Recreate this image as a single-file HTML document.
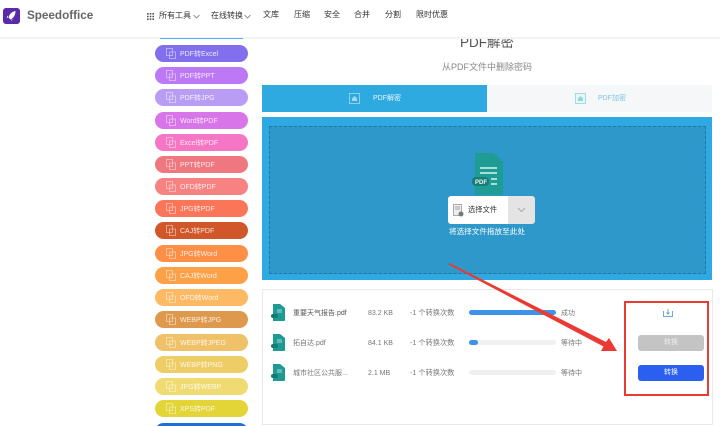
<!DOCTYPE html>
<html lang="zh"><head><meta charset="utf-8">
<style>
html,body{margin:0;padding:0;width:720px;height:426px;overflow:hidden;background:#fff}
#w{position:absolute;left:0;top:0;width:720px;height:426px;overflow:hidden;background:#fff;font-family:"Liberation Sans","Noto Sans CJK SC",sans-serif;color:#333;filter:blur(.3px)}
.a{position:absolute;white-space:nowrap}
.nav{top:9px;font-size:8px;line-height:14px;color:#333}
.pill{position:absolute;left:155px;width:93px;height:17px;border-radius:9px;color:#fff;font-size:7px;line-height:17px;opacity:.95}
.pill span{position:absolute;left:25px;top:1px;opacity:.85}
.pill svg{position:absolute;left:11px;top:3px}
.t{font-size:7px;line-height:12px;color:#777}
.bar{position:absolute;left:469px;width:87px;height:5px;border-radius:3px;background:#f0f0f0}
.bar i{display:block;height:5px;border-radius:3px;background:#3f92ea}
</style></head><body><div id="w">

<div class="a" style="left:0;top:0;width:720px;height:37px;background:#fff;border-bottom:2px solid #f3f3f3"></div>
<svg class="a" style="left:3px;top:8px" width="17" height="16" viewBox="0 0 17 16"><rect width="17" height="16" rx="3" fill="#5b2aa8"/><path d="M12.5 3 C9 3.500 6.500 6 5.500 9.500 L7.500 11.500 C10.500 10 12.500 7 12.500 3Z M5 7.500 L3.500 9.500 L5 9.800Z M8 12 L9.800 11 L8.800 12.800Z" fill="#fff"/></svg>
<div class="a" style="left:27px;top:7px;font-size:11.7px;line-height:18px;font-weight:bold;color:#666">Speedoffice</div>

<svg class="a" style="left:147px;top:13px" width="7" height="7" viewBox="0 0 7 7"><path d="M0 0h1.600v1.600H0zM2.700 0h1.600v1.600H2.700zM5.400 0h1.600v1.600H5.400zM0 2.700h1.600v1.600H0zM2.700 2.700h1.600v1.600H2.700zM5.400 2.700h1.600v1.600H5.400zM0 5.400h1.600v1.600H0zM2.700 5.400h1.600v1.600H2.700zM5.400 5.400h1.600v1.600H5.400z" fill="#555"/></svg>
<div class="a nav" style="left:159px">所有工具</div>
<svg class="a" style="left:193px;top:14px" width="7" height="5" viewBox="0 0 7 5"><path d="M.5 1l3 3 3-3" fill="none" stroke="#777" stroke-width=".8"/></svg>
<div class="a nav" style="left:211px">在线转换</div>
<svg class="a" style="left:244px;top:14px" width="7" height="5" viewBox="0 0 7 5"><path d="M.5 1l3 3 3-3" fill="none" stroke="#777" stroke-width=".8"/></svg>
<div class="a nav" style="left:263px;top:8px">文库</div>
<div class="a nav" style="left:294px;top:8px">压缩</div>
<div class="a nav" style="left:324px;top:8px">安全</div>
<div class="a nav" style="left:354px;top:8px">合并</div>
<div class="a nav" style="left:385px;top:8px">分割</div>
<div class="a nav" style="left:416px;top:8px">限时优惠</div>

<div class="a" style="left:160px;top:38px;width:83px;height:1px;background:#52b0ef"></div>

<div class="pill" style="top:45px;background:#7b68ee"><svg width="10" height="11" viewBox="0 0 10 11"><path d="M.5.500h6v7h-6zM3.500 4h6v6.500h-6z" fill="none" stroke="#fff" stroke-opacity=".55" stroke-width=".8"/></svg><span>PDF转Excel</span></div>
<div class="pill" style="top:67px;background:#b971f5"><svg width="10" height="11" viewBox="0 0 10 11"><path d="M.5.500h6v7h-6zM3.500 4h6v6.500h-6z" fill="none" stroke="#fff" stroke-opacity=".55" stroke-width=".8"/></svg><span>PDF转PPT</span></div>
<div class="pill" style="top:89px;background:#b698f5"><svg width="10" height="11" viewBox="0 0 10 11"><path d="M.5.500h6v7h-6zM3.500 4h6v6.500h-6z" fill="none" stroke="#fff" stroke-opacity=".55" stroke-width=".8"/></svg><span>PDF转JPG</span></div>
<div class="pill" style="top:112px;background:#d56ee8"><svg width="10" height="11" viewBox="0 0 10 11"><path d="M.5.500h6v7h-6zM3.500 4h6v6.500h-6z" fill="none" stroke="#fff" stroke-opacity=".55" stroke-width=".8"/></svg><span>Word转PDF</span></div>
<div class="pill" style="top:134px;background:#f56fc1"><svg width="10" height="11" viewBox="0 0 10 11"><path d="M.5.500h6v7h-6zM3.500 4h6v6.500h-6z" fill="none" stroke="#fff" stroke-opacity=".55" stroke-width=".8"/></svg><span>Excel转PDF</span></div>
<div class="pill" style="top:156px;background:#ef7079"><svg width="10" height="11" viewBox="0 0 10 11"><path d="M.5.500h6v7h-6zM3.500 4h6v6.500h-6z" fill="none" stroke="#fff" stroke-opacity=".55" stroke-width=".8"/></svg><span>PPT转PDF</span></div>
<div class="pill" style="top:178px;background:#f77c7c"><svg width="10" height="11" viewBox="0 0 10 11"><path d="M.5.500h6v7h-6zM3.500 4h6v6.500h-6z" fill="none" stroke="#fff" stroke-opacity=".55" stroke-width=".8"/></svg><span>OFD转PDF</span></div>
<div class="pill" style="top:200px;background:#fb6f50"><svg width="10" height="11" viewBox="0 0 10 11"><path d="M.5.500h6v7h-6zM3.500 4h6v6.500h-6z" fill="none" stroke="#fff" stroke-opacity=".55" stroke-width=".8"/></svg><span>JPG转PDF</span></div>
<div class="pill" style="top:222px;background:#cf4f1f"><svg width="10" height="11" viewBox="0 0 10 11"><path d="M.5.500h6v7h-6zM3.500 4h6v6.500h-6z" fill="none" stroke="#fff" stroke-opacity=".55" stroke-width=".8"/></svg><span>CAJ转PDF</span></div>
<div class="pill" style="top:245px;background:#fd8a3e"><svg width="10" height="11" viewBox="0 0 10 11"><path d="M.5.500h6v7h-6zM3.500 4h6v6.500h-6z" fill="none" stroke="#fff" stroke-opacity=".55" stroke-width=".8"/></svg><span>JPG转Word</span></div>
<div class="pill" style="top:267px;background:#fd9d40"><svg width="10" height="11" viewBox="0 0 10 11"><path d="M.5.500h6v7h-6zM3.500 4h6v6.500h-6z" fill="none" stroke="#fff" stroke-opacity=".55" stroke-width=".8"/></svg><span>CAJ转Word</span></div>
<div class="pill" style="top:289px;background:#feb65c"><svg width="10" height="11" viewBox="0 0 10 11"><path d="M.5.500h6v7h-6zM3.500 4h6v6.500h-6z" fill="none" stroke="#fff" stroke-opacity=".55" stroke-width=".8"/></svg><span>OFD转Word</span></div>
<div class="pill" style="top:311px;background:#dd9443"><svg width="10" height="11" viewBox="0 0 10 11"><path d="M.5.500h6v7h-6zM3.500 4h6v6.500h-6z" fill="none" stroke="#fff" stroke-opacity=".55" stroke-width=".8"/></svg><span>WEBP转JPG</span></div>
<div class="pill" style="top:334px;background:#efbe62"><svg width="10" height="11" viewBox="0 0 10 11"><path d="M.5.500h6v7h-6zM3.500 4h6v6.500h-6z" fill="none" stroke="#fff" stroke-opacity=".55" stroke-width=".8"/></svg><span>WEBP转JPEG</span></div>
<div class="pill" style="top:356px;background:#efcb5e"><svg width="10" height="11" viewBox="0 0 10 11"><path d="M.5.500h6v7h-6zM3.500 4h6v6.500h-6z" fill="none" stroke="#fff" stroke-opacity=".55" stroke-width=".8"/></svg><span>WEBP转PNG</span></div>
<div class="pill" style="top:378px;background:#f0da6c"><svg width="10" height="11" viewBox="0 0 10 11"><path d="M.5.500h6v7h-6zM3.500 4h6v6.500h-6z" fill="none" stroke="#fff" stroke-opacity=".55" stroke-width=".8"/></svg><span>JPG转WEBP</span></div>
<div class="pill" style="top:400px;background:#e2d22e"><svg width="10" height="11" viewBox="0 0 10 11"><path d="M.5.500h6v7h-6zM3.500 4h6v6.500h-6z" fill="none" stroke="#fff" stroke-opacity=".55" stroke-width=".8"/></svg><span>XPS转PDF</span></div>
<div class="a" style="left:155px;top:423px;width:93px;height:3px;overflow:hidden"><div style="width:93px;height:17px;border-radius:9px;background:#1f6fd6"></div></div>

<div class="a" style="left:262px;top:39px;width:450px;text-align:center;font-size:13.5px;line-height:16px;color:#555;height:11px;overflow:hidden"><span style="position:relative;top:-4px">PDF解密</span></div>
<div class="a" style="left:262px;top:60px;width:450px;text-align:center;font-size:9px;line-height:14px;color:#888">从PDF文件中删除密码</div>

<div class="a" style="left:262px;top:85px;width:225px;height:27px;background:#2faae1"></div>
<div class="a" style="left:487px;top:85px;width:225px;height:27px;background:#f5f7f9"></div>
<svg class="a" style="left:349px;top:93px" width="11" height="11" viewBox="0 0 11 11"><rect x=".5" y=".5" width="10" height="10" fill="none" stroke="#a5d8f0" stroke-width=".8"/><path d="M3 8V5.500L5.500 3 8 5.500V8z" fill="#a5d8f0"/></svg>
<div class="a" style="left:373px;top:92px;font-size:7px;line-height:13px;color:#e8f6fd">PDF解密</div>
<svg class="a" style="left:575px;top:93px" width="11" height="11" viewBox="0 0 11 11"><rect x=".5" y=".5" width="10" height="10" fill="#e6f5f5" stroke="#8fd6d6" stroke-width=".8"/><path d="M3 8V5.500L5.500 3 8 5.500V8z" fill="#8fd6d6"/></svg>
<div class="a" style="left:598px;top:92px;font-size:7px;line-height:13px;color:#7fc4e2">PDF加密</div>

<div class="a" style="left:262px;top:117px;width:450px;height:163px;background:#2ea9e2"></div>
<div class="a" style="left:269px;top:126px;width:435px;height:146px;background:#2d98c9;border:1px dashed #23789f"></div>

<svg class="a" style="left:471px;top:153px" width="33" height="42" viewBox="0 0 33 42"><path d="M4 0H23L32 9V40a2 2 0 0 1-2 2H4z" fill="#1f9c93"/><path d="M9 15h17M9 20h17M20 26h6M20 31h6" stroke="#d8f3ef" stroke-width="1.400"/><rect x="1" y="24" width="17" height="9" rx="4" fill="#167c76"/><text x="4" y="31" font-size="6" font-weight="bold" fill="#e8f5f3" font-family="Liberation Sans,sans-serif">PDF</text></svg>

<div class="a" style="left:448px;top:196px;width:60px;height:28px;background:#fff;border-radius:3px 0 0 3px"></div>
<div class="a" style="left:508px;top:196px;width:27px;height:28px;background:#e4e4e4;border-radius:0 3px 3px 0"></div>
<svg class="a" style="left:453px;top:204px" width="11" height="13" viewBox="0 0 11 13"><rect x="0.500" y=".5" width="8" height="11" fill="#eee" stroke="#999" stroke-width=".8"/><path d="M2 3h5M2 5h5" stroke="#888" stroke-width=".8"/><circle cx="8" cy="10" r="2.500" fill="#777"/></svg>
<div class="a" style="left:468px;top:203px;font-size:7.3px;line-height:14px;color:#333">选择文件</div>
<svg class="a" style="left:517px;top:207px" width="9" height="6" viewBox="0 0 9 6"><path d="M1 1l3.500 3.500L8 1" fill="none" stroke="#aaa" stroke-width="1"/></svg>
<div class="a" style="left:449px;top:225px;font-size:7.6px;line-height:13px;color:#fff">将选择文件拖放至此处</div>

<div class="a" style="left:262px;top:289px;width:449px;height:134px;border:1px solid #e9e9e9;background:#fff"></div>

<svg class="a" style="left:271px;top:304px" width="14" height="17" viewBox="0 0 14 17"><path d="M2 0H9L14 4V16a1 1 0 0 1-1 1H2z" fill="#1d9a93"/><path d="M6 6h5M6 8h5" stroke="#cdeeea" stroke-width=".8"/><rect x="0" y="10" width="7" height="4" rx="2" fill="#137a74"/></svg>
<svg class="a" style="left:271px;top:334px" width="14" height="17" viewBox="0 0 14 17"><path d="M2 0H9L14 4V16a1 1 0 0 1-1 1H2z" fill="#1d9a93"/><path d="M6 6h5M6 8h5" stroke="#cdeeea" stroke-width=".8"/><rect x="0" y="10" width="7" height="4" rx="2" fill="#137a74"/></svg>
<svg class="a" style="left:271px;top:364px" width="14" height="17" viewBox="0 0 14 17"><path d="M2 0H9L14 4V16a1 1 0 0 1-1 1H2z" fill="#1d9a93"/><path d="M6 6h5M6 8h5" stroke="#cdeeea" stroke-width=".8"/><rect x="0" y="10" width="7" height="4" rx="2" fill="#137a74"/></svg>

<div class="a t" style="left:293px;top:308px;color:#555">重要天气报告.pdf</div>
<div class="a t" style="left:293px;top:338px">拓自达.pdf</div>
<div class="a t" style="left:293px;top:368px">城市社区公共服...</div>
<div class="a t" style="left:368px;top:308px">83.2 KB</div>
<div class="a t" style="left:368px;top:338px">84.1 KB</div>
<div class="a t" style="left:368px;top:368px">2.1 MB</div>
<div class="a t" style="left:410px;top:307px;font-size:7.2px">-1 个转换次数</div>
<div class="a t" style="left:410px;top:337px;font-size:7.2px">-1 个转换次数</div>
<div class="a t" style="left:410px;top:367px;font-size:7.2px">-1 个转换次数</div>

<div class="bar" style="top:310px"><i style="width:87px"></i></div>
<div class="bar" style="top:340px"><i style="width:9px"></i></div>
<div class="bar" style="top:370px"></div>
<div class="a t" style="left:561px;top:308px">成功</div>
<div class="a t" style="left:561px;top:338px">等待中</div>
<div class="a t" style="left:561px;top:368px">等待中</div>

<svg class="a" style="left:663px;top:308px" width="10" height="9" viewBox="0 0 10 9"><path d="M.5 3v5.500h9V3M5 1v5M3.500 4.500L5 6l1.500-1.500" fill="none" stroke="#4a8fe0" stroke-width=".8"/></svg>
<div class="a" style="left:638px;top:335px;width:66px;height:16px;background:#c4c4c4;border-radius:3px;color:#eee;font-size:7px;line-height:16px;text-align:center">转换</div>
<div class="a" style="left:638px;top:365px;width:66px;height:16px;background:#2a5ff0;border-radius:3px;color:#fff;font-size:7px;line-height:16px;text-align:center">转换</div>

<div class="a" style="left:624px;top:301px;width:81px;height:91px;border:2px solid #ea3a34"></div>
<svg class="a" style="left:440px;top:255px" width="185" height="105" viewBox="440 255 185 105"><path d="M449.500 263 L606 342 L609 338 L617 351 L601 351 L603.500 346.500 L448.500 264.500 Z" fill="#ea3a34"/></svg>

</div></body></html>
